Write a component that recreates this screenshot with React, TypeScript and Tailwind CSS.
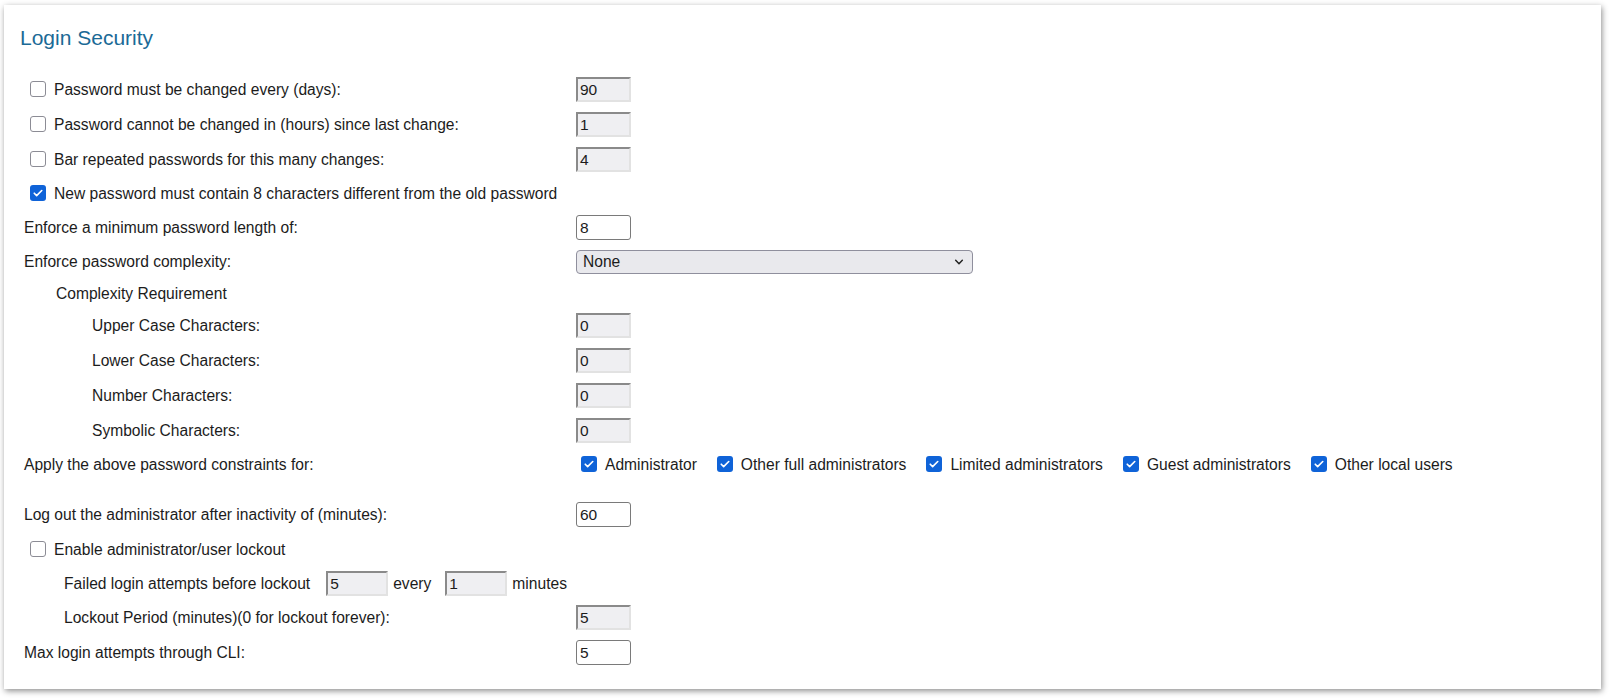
import React from "react";

const font = { fontFamily: '"Liberation Sans", Arial, sans-serif' };

function Box({ checked = false }: { checked?: boolean }) {
  if (checked) {
    return (
      <span className="flex h-[16px] w-[16px] shrink-0 items-center justify-center rounded-[3px] bg-[#0f63d8]">
        <svg viewBox="0 0 16 16" className="h-[12px] w-[12px]" fill="none">
          <path d="M3 8.3l3.2 3.2L13 4.7" stroke="white" strokeWidth="2.2" strokeLinecap="round" strokeLinejoin="round" />
        </svg>
      </span>
    );
  }
  return <span className="block h-[16px] w-[16px] shrink-0 rounded-[3px] border-[1.5px] border-[#8c8c95] bg-white" />;
}

function Disabled({ value, wide = false }: { value: string; wide?: boolean }) {
  return (
    <div
      className={`flex h-[25px] items-center border-2 border-t-[#8a8a8a] border-l-[#8a8a8a] border-r-[#e2e2e2] border-b-[#e2e2e2] bg-[#efeff2] pl-[2px] text-[15.5px] text-[#1c1c1c] ${
        wide ? "w-[62px]" : "w-[55px]"
      }`}
    >
      {value}
    </div>
  );
}

function Enabled({ value }: { value: string }) {
  return (
    <div className="flex h-[25px] w-[55px] items-center rounded-[3px] border border-[#7a7a7a] bg-white pl-[3px] text-[15.5px] text-[#1c1c1c]">
      {value}
    </div>
  );
}

function Row({
  label,
  indent = "pl-0",
  check,
  h = "h-[35px]",
  children,
}: {
  label: string;
  indent?: string;
  check?: boolean;
  h?: string;
  children?: React.ReactNode;
}) {
  return (
    <div className={`flex items-center ${h}`}>
      <div className={`flex w-[552px] items-center ${indent}`}>
        {check !== undefined && (
          <span className="ml-[6px] mr-[8px] flex">
            <Box checked={check} />
          </span>
        )}
        <span className="whitespace-nowrap">{label}</span>
      </div>
      {children}
    </div>
  );
}

const targets = [
  "Administrator",
  "Other full administrators",
  "Limited administrators",
  "Guest administrators",
  "Other local users",
];

export default function App() {
  return (
    <div className="min-h-screen bg-white pl-[4px] pt-[5px]" style={font}>
      <div className="flex h-[684px] w-[1597px] flex-col bg-white pl-[20px] pt-[19px] text-[15.6px] text-[#1c1c1c] shadow-[1px_2px_6px_rgba(0,0,0,0.45)]">
        <h2 className="-ml-[4px] h-[28px] text-[21px] leading-[28px] text-[#1b6a96]">Login Security</h2>

        <div className="mt-[20px] flex flex-col">
          <Row label="Password must be changed every (days):" check={false}>
            <Disabled value="90" />
          </Row>
          <Row label="Password cannot be changed in (hours) since last change:" check={false}>
            <Disabled value="1" />
          </Row>
          <Row label="Bar repeated passwords for this many changes:" check={false}>
            <Disabled value="4" />
          </Row>
          <Row label="New password must contain 8 characters different from the old password" check h="h-[33px]" />
          <Row label="Enforce a minimum password length of:">
            <Enabled value="8" />
          </Row>
          <Row label="Enforce password complexity:" h="h-[34px]">
            <div className="flex h-[24px] w-[397px] items-center justify-between rounded-[4px] border border-[#8f8f9d] bg-[#e9e9ed] pl-[6px] pr-[8px]">
              <span>None</span>
              <svg viewBox="0 0 12 12" className="h-[10px] w-[10px]" fill="none">
                <path d="M2 4l4 4 4-4" stroke="#222" strokeWidth="1.8" strokeLinecap="round" strokeLinejoin="round" />
              </svg>
            </div>
          </Row>
          <Row label="Complexity Requirement" indent="pl-[32px]" h="h-[29px]" />
          <Row label="Upper Case Characters:" indent="pl-[68px]">
            <Disabled value="0" />
          </Row>
          <Row label="Lower Case Characters:" indent="pl-[68px]">
            <Disabled value="0" />
          </Row>
          <Row label="Number Characters:" indent="pl-[68px]">
            <Disabled value="0" />
          </Row>
          <Row label="Symbolic Characters:" indent="pl-[68px]">
            <Disabled value="0" />
          </Row>
          <Row label="Apply the above password constraints for:" h="h-[33px]">
            <div className="ml-[5px] flex items-center gap-[20px]">
              {targets.map((t) => (
                <label key={t} className="flex items-center gap-[8px] whitespace-nowrap">
                  <Box checked />
                  <span>{t}</span>
                </label>
              ))}
            </div>
          </Row>

          <div className="mt-[16px] flex flex-col">
            <Row label="Log out the administrator after inactivity of (minutes):">
              <Enabled value="60" />
            </Row>
            <Row label="Enable administrator/user lockout" check={false} />
            <div className="flex h-[33px] items-center pl-[40px]">
              <span className="whitespace-nowrap">Failed login attempts before lockout</span>
              <span className="ml-[16px] flex">
                <Disabled value="5" wide />
              </span>
              <span className="ml-[5px]">every</span>
              <span className="ml-[14px] flex">
                <Disabled value="1" wide />
              </span>
              <span className="ml-[5px]">minutes</span>
            </div>
            <Row label="Lockout Period (minutes)(0 for lockout forever):" indent="pl-[40px]">
              <Disabled value="5" />
            </Row>
            <Row label="Max login attempts through CLI:">
              <Enabled value="5" />
            </Row>
          </div>
        </div>
      </div>
    </div>
  );
}
